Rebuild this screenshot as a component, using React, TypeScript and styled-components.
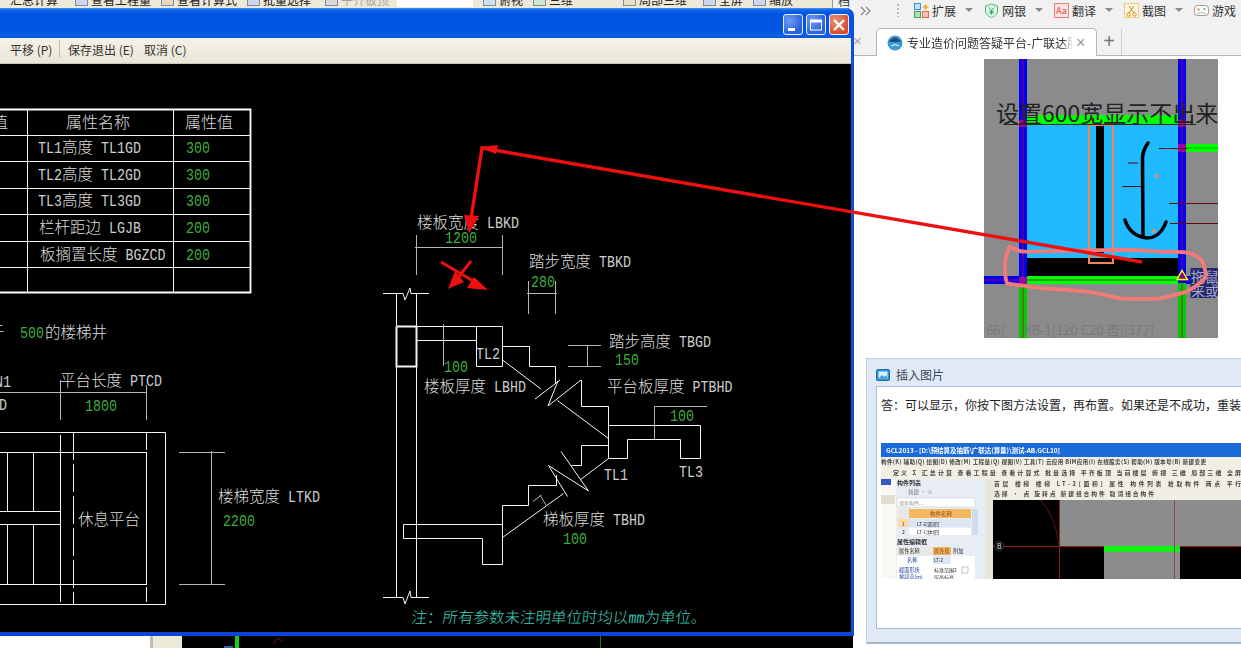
import React from "react";
import styled, { createGlobalStyle } from "styled-components";

const CJK = '"Noto Sans CJK SC", "Liberation Sans", sans-serif';

const Global = createGlobalStyle`
  html, body { margin: 0; padding: 0; width: 1241px; height: 648px; overflow: hidden; background: #fff; }
  #root { width: 1241px; height: 648px; }
`;

const Desktop = styled.div`
  position: relative;
  width: 1241px;
  height: 648px;
  overflow: hidden;
  display: grid;
  grid-template-columns: 853px 388px;
  font-family: ${CJK};
  font-size: 12px;
  color: #222;
`;

/* ---------- application behind the window ---------- */
const BackPane = styled.div`
  display: flex;
  flex-direction: column;
  justify-content: space-between;
  height: 648px;
`;
const BackTop = styled.div`
  height: 8px;
  display: flex;
  overflow: hidden;
`;
const AppStrip = styled.div`
  width: 833px;
  height: 8px;
  background: #ece9d8;
  overflow: hidden;
  border-right: 1px solid #9a9a9a;
  box-sizing: border-box;
`;
const AppStripRow = styled.div`
  display: flex;
  align-items: center;
  height: 18px;
  margin-top: -10px;
  padding-left: 10px;
`;
const AppStripItem = styled.span<{ $w: number; $muted?: boolean }>`
  display: flex;
  align-items: center;
  gap: 3px;
  width: ${(p) => p.$w}px;
  flex: none;
  white-space: nowrap;
  color: ${(p) => (p.$muted ? "#a8a8a8" : "#222")};
`;
const AppStripIcon = styled.i<{ $c: string }>`
  display: block;
  width: 13px;
  height: 14px;
  background: ${(p) => p.$c};
  border: 1px solid #7d8ba6;
  box-sizing: border-box;
`;
const AppStripField = styled.span`
  display: block;
  width: 76px;
  height: 16px;
  margin-right: 10px;
  background: #fff;
  flex: none;
`;
const BrowserCorner = styled.div`
  flex: 1;
  background: #f1f1f1;
  line-height: 12px;
  margin-top: -5px;
  padding-left: 5px;
  color: #333;
`;
const BackBottom = styled.div`
  height: 12px;
  display: flex;
  background: #000;
`;
const BackWhite = styled.div`
  width: 150px;
  background: #fff;
  border-right: 3px solid #bdbdb5;
  flex: none;
`;
const BackBeige = styled.div`
  width: 29px;
  background: #ece9d8;
  flex: none;
`;
const BackCanvas = styled.svg`
  flex: 1;
  height: 12px;
  display: block;
`;

/* ---------- browser ---------- */
const Browser = styled.div`
  display: flex;
  flex-direction: column;
  height: 648px;
  background: #fff;
  overflow: hidden;
`;
const BrowserBar = styled.div`
  height: 28px;
  flex: none;
  background: #f1f1f1;
  display: flex;
  align-items: flex-start;
  padding: 2px 0 0 7px;
  box-sizing: border-box;
  color: #333;
`;
const Chevrons = styled.svg`
  width: 12px;
  height: 12px;
  margin: 3px 25px 0 0;
  flex: none;
`;
const Grip = styled.i`
  width: 2px;
  height: 13px;
  margin: 2px 15px 0 0;
  flex: none;
  background: repeating-linear-gradient(#bdbdbd 0 2px, transparent 2px 4px);
`;
const BarItem = styled.div`
  display: flex;
  align-items: center;
  height: 16px;
  flex: none;
  width: 70px;
`;
const BarIcon = styled.svg`
  width: 15px;
  height: 15px;
  margin-right: 3px;
  flex: none;
`;
const BarCaret = styled.i`
  width: 0;
  height: 0;
  margin-left: 9px;
  border-left: 4px solid transparent;
  border-right: 4px solid transparent;
  border-top: 4px solid #8a8a8a;
`;
const TabBar = styled.div`
  height: 28px;
  flex: none;
  background: #f1f1f1;
  border-bottom: 1px solid #b7b7b7;
  box-sizing: border-box;
  display: flex;
  align-items: flex-end;
`;
const TabStub = styled.div`
  width: 23px;
  height: 27px;
  flex: none;
  color: #aaa;
  font-size: 15px;
  line-height: 25px;
  font-family: "Liberation Sans", sans-serif;
`;
const Tab = styled.div`
  width: 221px;
  height: 28px;
  flex: none;
  background: #fff;
  border: 1px solid #b7b7b7;
  border-bottom: none;
  border-radius: 5px 5px 0 0;
  box-sizing: border-box;
  display: flex;
  align-items: center;
  padding: 0 9px 0 10px;
  margin-bottom: -1px;
`;
const Favicon = styled.svg`
  width: 16px;
  height: 16px;
  flex: none;
`;
const TabTitle = styled.span`
  width: 166px;
  flex: none;
  margin-left: 4px;
  overflow: hidden;
  white-space: nowrap;
  color: #333;
  mask-image: linear-gradient(90deg, #000 94%, transparent);
`;
const TabClose = styled.span`
  color: #999;
  font-size: 16px;
  margin-left: 3px;
  font-family: "Liberation Sans", sans-serif;
`;
const TabPlus = styled.div`
  width: 25px;
  height: 27px;
  flex: none;
  text-align: center;
  color: #777;
  font-size: 20px;
  line-height: 26px;
  border-right: 1px solid #d0d0d0;
  box-sizing: border-box;
  font-family: "Liberation Sans", sans-serif;
`;
const Page = styled.div`
  flex: 1;
  display: flex;
  flex-direction: column;
  padding-top: 3px;
`;
const QuestionShot = styled.svg`
  display: block;
  width: 234px;
  height: 279px;
  margin-left: 131px;
  flex: none;
`;
const Dialog = styled.div`
  width: 400px;
  height: 286px;
  margin: 20px 0 0 13px;
  flex: none;
  background: #dfeaf6;
  border: 1px solid #bccde0;
  border-bottom: 2px solid #a9b8c8;
  box-sizing: border-box;
  padding: 0 0 13px 9px;
  display: flex;
  flex-direction: column;
`;
const DialogHead = styled.div`
  height: 27px;
  flex: none;
  display: flex;
  align-items: center;
  gap: 6px;
  padding-top: 4px;
  box-sizing: border-box;
  color: #3a4656;
`;
const DialogBody = styled.div`
  flex: 1;
  background: #fff;
  border: 1px solid #a9bfd4;
  padding: 9px 0 0 4px;
  color: #222;
`;
const AnswerLine = styled.div`
  height: 18px;
  line-height: 18px;
  white-space: nowrap;
`;
const AnswerShot = styled.svg`
  display: block;
  margin-top: 29px;
  width: 360px;
  height: 136px;
  filter: blur(0.45px);
`;

/* ---------- CAD window ---------- */
const CadWindow = styled.div`
  position: absolute;
  left: -3px;
  top: 8px;
  width: 857px;
  height: 628px;
  box-sizing: border-box;
  border-right: 3px solid #0b4fdc;
  border-left: 3px solid #0b4fdc;
  border-bottom: 4px solid #0c46d0;
  border-radius: 0 8px 0 0;
  background: #0b4fdc;
  display: flex;
  flex-direction: column;
  overflow: hidden;
`;
const TitleBar = styled.div`
  height: 30px;
  flex: none;
  background: linear-gradient(#4a96f2 0, #1166e6 2px, #0054e0 6px, #0056e2 22px, #0a62e6 28px, #0a4fd0 30px);
  display: flex;
  justify-content: flex-end;
  align-items: flex-start;
  gap: 3px;
  padding: 6px 2px 0 0;
  box-sizing: border-box;
`;
const WinButton = styled.div<{ $close?: boolean }>`
  width: 20px;
  height: 21px;
  box-sizing: border-box;
  border: 1px solid #e8eefc;
  border-radius: 3px;
  background: ${(p) =>
    p.$close
      ? "radial-gradient(circle at 30% 30%, #ee9074, #d8502c 70%)"
      : "radial-gradient(circle at 30% 30%, #6e9df0, #2c62dc 70%)"};
  display: flex;
  align-items: center;
  justify-content: center;
`;
const WinGlyph = styled.svg`
  width: 16px;
  height: 16px;
  display: block;
`;
const CadToolbar = styled.div`
  height: 26px;
  flex: none;
  display: flex;
  align-items: center;
  padding-left: 10px;
  padding-bottom: 3px;
  box-sizing: border-box;
  background: linear-gradient(#f4f2e8, #e9e6d6);
  border-bottom: 1px solid #c9c6b4;
  color: #333;
`;
const CadCommand = styled.span<{ $w: number }>`
  width: ${(p) => p.$w}px;
  flex: none;
  white-space: nowrap;
`;
const CadSep = styled.i`
  width: 1px;
  height: 18px;
  margin: 0 8px 0 0;
  background: #c4c1ae;
  flex: none;
`;
const CadCanvas = styled.svg`
  display: block;
  width: 851px;
  height: 568px;
  flex: none;
  background: #000;
`;
const CadCjk = styled.text<{ $tone: string }>`
  font-family: ${CJK};
  font-weight: 300;
  fill: ${(p) => p.$tone};
  fill-opacity: 0.92;
`;
const CadLatin = styled.text<{ $tone: string }>`
  font-family: "Liberation Mono", monospace;
  font-size: 16px;
  fill: ${(p) => p.$tone};
  fill-opacity: 0.85;
`;
const CadPath = styled.polyline<{ $tone: string; $w?: number; $dash?: string }>`
  fill: none;
  stroke: ${(p) => p.$tone};
  stroke-width: ${(p) => p.$w ?? 1};
  stroke-dasharray: ${(p) => p.$dash ?? "none"};
`;
const ArrowLayer = styled.svg`
  position: absolute;
  left: 0;
  top: 0;
  width: 1241px;
  height: 648px;
  pointer-events: none;
`;
const ShotText = styled.text<{ $c?: string; $s?: number; $w?: number }>`
  font-family: ${CJK};
  font-size: ${(p) => p.$s ?? 6}px;
  font-weight: ${(p) => p.$w ?? 400};
  fill: ${(p) => p.$c ?? "#333"};
`;

const WHITE = "#f4f4f4";
const GRAY = "#b4b4b4";
const GREEN = "#4ad04a";
const CYAN = "#48e4d4";

const CadLabel = ({
  x,
  y,
  text,
  tone = WHITE,
  cjk = 15.5,
}: {
  x: number;
  y: number;
  text: string;
  tone?: string;
  cjk?: number;
}) => {
  const runs = text.match(/[\u3000-\u9fff\uff00-\uffef]+| +|[^\u3000-\u9fff\uff00-\uffef ]+/g) ?? [];
  let cx = x;
  return (
    <g>
      {runs.map((r, i) => {
        const at = cx;
        if (/^ +$/.test(r)) {
          cx += 8 * r.length;
          return null;
        }
        if (/^[\u3000-\u9fff\uff00-\uffef]/.test(r)) {
          cx += cjk * r.length;
          return (
            <CadCjk key={i} x={at} y={y} fontSize={cjk} $tone={tone}>
              {r}
            </CadCjk>
          );
        }
        cx += 8 * r.length;
        return (
          <CadLatin key={i} transform={`translate(${at} ${y}) scale(0.8333 1)`} $tone={tone}>
            {r}
          </CadLatin>
        );
      })}
    </g>
  );
};

const tableFrame = "0,109.5 250.5,109.5 250.5,292.5 0,292.5";

const whitePaths = [
  // table
  "0,135.5 250,135.5",
  "0,161.5 250,161.5",
  "0,188.5 250,188.5",
  "0,214.5 250,214.5",
  "0,241.5 250,241.5",
  "0,267.5 250,267.5",
  "27.5,109 27.5,293",
  "173.5,109 173.5,293",
  // plan view
  "0,432.5 165.5,432.5 165.5,604.5 0,604.5",
  "0,452.5 147,452.5",
  "0,584.5 147,584.5",
  "60.5,435 60.5,602",
  "146.5,432 146.5,450",
  "146.5,452 146.5,584",
  "146.5,587 146.5,602",
  "7.5,452 7.5,511",
  "33.5,452 33.5,511",
  "7.5,524 7.5,584",
  "33.5,524 33.5,584",
  "0,511.5 60,511.5",
  "0,524.5 60,524.5",
  // wall + breaks
  "383,293.5 403,293.5 405,300 410,288 411,293.5 429,293.5",
  "383,597.5 403,597.5 405,604 410,591 411,597.5 429,597.5",
  "396.5,293 396.5,326",
  "416.5,293 416.5,326",
  "396.5,366 396.5,597",
  "416.5,366 416.5,597",
  // upper landing + flight
  "416,326.5 502.5,326.5 502.5,346.5 529.5,346.5 529.5,366.5 555.5,366.5 555.5,384",
  "416,340.5 476.5,340.5",
  "476.5,326.5 476.5,366.5 502.5,366.5 502.5,346.5",
  "502.5,360 541,389",
  "535,399 560,380",
  "548,406 558,381",
  "548,406 581,380",
  "557.5,400.5 608.5,438.5",
  "581.5,380 581.5,406.5 608.5,406.5 608.5,458.5",
  // middle landing
  "608.5,425.5 700.5,425.5 700.5,458.5 680.5,458.5 680.5,439.5 627.5,439.5 627.5,458.5 608.5,458.5",
  // lower flight
  "608.5,445.5 581.5,445.5 581.5,465.5 571.5,465.5",
  "561,451.5 588.5,491",
  "548.5,465.5 588.5,491",
  "548.5,465.5 567.5,496.5",
  "608.5,458.5 580,480",
  "563.5,493.5 502.5,537.5",
  "556.5,475 556.5,485.5 528.5,485.5 528.5,505.5 502.5,505.5 502.5,564.5 482.5,564.5 482.5,538.5 403.5,538.5 403.5,524.5 502.5,524.5",
];

const grayPaths = [
  "0,392.5 146,392.5",
  "60.5,380 60.5,420",
  "146.5,385 146.5,420",
  "179,452.5 225,452.5",
  "179,584.5 225,584.5",
  "211.5,451 211.5,585",
  "416.5,235 416.5,275",
  "502.5,235 502.5,275",
  "415,247.5 503,247.5",
  "528.5,281 528.5,314",
  "555.5,281 555.5,314",
  "527,293.5 557,293.5",
  "443.5,324 443.5,366",
  "568,345.5 601,345.5",
  "568,366.5 601,366.5",
  "587.5,345 587.5,367",
  "654.5,439 654.5,406.5 707,406.5",
  "533,501.5 541.5,495",
  "540,495 546.5,506",
];

const ShieldPath = "M7.5 1 L13.5 3 V8 C13.5 11 10.5 13.5 7.5 14.5 C4.5 13.5 1.5 11 1.5 8 V3 Z";

const BrowserIcon = ({ kind }: { kind: string }) => {
  if (kind === "ext")
    return (
      <BarIcon viewBox="0 0 15 15">
        <rect x="0.5" y="0.5" width="6" height="6" fill="#bfe0f8" stroke="#3d8fd6" />
        <path d="M11.5 0.5 L13 3 L15 4 L13 5 L11.5 7.5 L10 5 L8 4 L10 3 Z" fill="#f0b030" />
        <rect x="0.5" y="8.5" width="6" height="6" fill="#a8e6b8" stroke="#39a85a" />
        <rect x="8.5" y="8.5" width="6" height="6" fill="#f8c0b0" stroke="#e06a50" />
      </BarIcon>
    );
  if (kind === "bank")
    return (
      <BarIcon viewBox="0 0 15 15">
        <path d={ShieldPath} fill="#dff6e6" stroke="#45b878" />
        <path d="M5 4.5 L7.5 7.5 L10 4.5 M7.5 7.5 V11.5 M5.3 8.3 H9.7 M5.3 10 H9.7" fill="none" stroke="#2f9e64" />
      </BarIcon>
    );
  if (kind === "trans")
    return (
      <BarIcon viewBox="0 0 15 15">
        <rect x="0.5" y="0.5" width="14" height="14" fill="#fbe3e0" stroke="#e8837a" />
        <ShotText x="2" y="11" $s={9} $c="#cf4b40">
          Aa
        </ShotText>
      </BarIcon>
    );
  if (kind === "shot")
    return (
      <BarIcon viewBox="0 0 15 15">
        <rect x="0.5" y="0.5" width="14" height="14" fill="#fdf6dc" stroke="#e8b84a" strokeDasharray="2 1" />
        <path d="M5 3 L10 10 M10 3 L5 10" stroke="#b8862a" strokeWidth="1" />
        <circle cx="4.5" cy="11.5" r="1.7" fill="none" stroke="#d8901c" />
        <circle cx="10.5" cy="11.5" r="1.7" fill="none" stroke="#d8901c" />
      </BarIcon>
    );
  return (
    <BarIcon viewBox="0 0 15 15">
      <rect x="0.5" y="2.5" width="14" height="10" rx="3" fill="#fff" stroke="#9a9a9a" />
      <circle cx="4.5" cy="6.5" r="1.2" fill="#e0a040" />
      <circle cx="10.5" cy="6" r="1" fill="#60a050" />
      <path d="M3 11 Q7.5 8 12 11" fill="none" stroke="#b0b0b0" />
    </BarIcon>
  );
};

const barItems = [
  { kind: "ext", label: "扩展" },
  { kind: "bank", label: "网银" },
  { kind: "trans", label: "翻译" },
  { kind: "shot", label: "截图" },
  { kind: "game", label: "游戏" },
];

const stripItems = [
  { w: 56, t: "汇总计算" },
  { w: 9, t: "" },
  { w: 86, t: "查看工程量", c: "#cfd8ea" },
  { w: 86, t: "查看计算式", c: "#e8d8c0" },
  { w: 78, t: "批量选择", c: "#cfd8ea" },
  { w: 72, t: "平齐板顶", c: "#d8d8d8", muted: true },
];
const stripTail = [
  { w: 50, t: "俯视", c: "#cfe0ea" },
  { w: 90, t: "三维", c: "#cfe8d0" },
  { w: 80, t: "局部三维", c: "#e8e0c0" },
  { w: 50, t: "全屏", c: "#cfd8ea" },
  { w: 60, t: "缩放", c: "#cfd8ea" },
];

export default function App() {
  return (
    <Desktop>
      <Global />
      <BackPane>
        <BackTop>
          <AppStrip>
            <AppStripRow>
              {stripItems.map((s, i) => (
                <AppStripItem key={i} $w={s.w} $muted={s.muted}>
                  {s.c && <AppStripIcon $c={s.c} />}
                  {s.t}
                </AppStripItem>
              ))}
              <AppStripField />
              {stripTail.map((s, i) => (
                <AppStripItem key={i} $w={s.w}>
                  <AppStripIcon $c={s.c} />
                  {s.t}
                </AppStripItem>
              ))}
            </AppStripRow>
          </AppStrip>
          <BrowserCorner>档</BrowserCorner>
        </BackTop>
        <BackBottom>
          <BackWhite />
          <BackBeige />
          <BackCanvas viewBox="182 636 671 12">
            <rect x="235" y="636" width="4" height="12" fill="#12d012" />
            <rect x="224" y="646" width="9" height="2" fill="#3a5fb0" />
            <path d="M273 644 L278 638 L283 642" fill="none" stroke="#7a1818" />
            <path d="M600.5 636 V648" stroke="#1f7a1f" />
          </BackCanvas>
        </BackBottom>
      </BackPane>

      <Browser>
        <BrowserBar>
          <Chevrons viewBox="0 0 12 12">
            <path d="M1 2 L5 6 L1 10 M6 2 L10 6 L6 10" fill="none" stroke="#888" strokeWidth="1.2" />
          </Chevrons>
          <Grip />
          {barItems.map((b) => (
            <BarItem key={b.kind}>
              <BrowserIcon kind={b.kind} />
              {b.label}
              {b.kind !== "game" && <BarCaret />}
            </BarItem>
          ))}
        </BrowserBar>
        <TabBar>
          <TabStub>×</TabStub>
          <Tab>
            <Favicon viewBox="0 0 16 16">
              <circle cx="8" cy="8" r="7.5" fill="#3d9ad8" />
              <path d="M2 7 Q8 -2 14 7 Z" fill="#1f4f78" />
              <path d="M4 11 Q8 8 12 11" stroke="#fff" fill="none" />
            </Favicon>
            <TabTitle>专业造价问题答疑平台-广联达服</TabTitle>
            <TabClose>×</TabClose>
          </Tab>
          <TabPlus>+</TabPlus>
        </TabBar>
        <Page>
          <QuestionShot viewBox="984 59 234 279">
            <rect x="984" y="59" width="234" height="279" fill="#8b8b8b" />
            <rect x="1027" y="125" width="151" height="133" fill="#1fbaff" />
            <rect x="1027" y="258" width="151" height="19" fill="#000" />
            <rect x="1027" y="115" width="151" height="10" fill="#0f0" />
            <rect x="1019" y="59" width="8" height="224" fill="#0000f0" />
            <rect x="1178" y="59" width="8" height="224" fill="#0000f0" />
            <rect x="984" y="276" width="35" height="8" fill="#0000f0" />
            <rect x="1186" y="276" width="5" height="8" fill="#0000f0" />
            <rect x="1027" y="276" width="151" height="8" fill="#0f0" />
            <rect x="1019" y="283" width="8" height="55" fill="#0c0" />
            <rect x="1178" y="283" width="8" height="55" fill="#0c0" />
            <rect x="1186" y="144" width="32" height="8" fill="#0f0" />
            <path d="M1023 59 V283 M1182 59 V283 M984 280 H1190 M1023 283 V338 M1182 283 V338" stroke="#c00040" strokeWidth="1" fill="none" opacity="0.8" />
            <path d="M1186 148 H1218 M1027 280 H1178" stroke="#0a0" fill="none" />
            <rect x="1019" y="120" width="8" height="7" fill="#a000a0" />
            <rect x="1178" y="120" width="8" height="7" fill="#a000a0" />
            <rect x="1178" y="144" width="8" height="8" fill="#a000a0" />
            <rect x="1019" y="277" width="8" height="7" fill="#a000a0" />
            <rect x="1096" y="126" width="8" height="127" fill="#000" />
            <rect x="1089" y="125" width="24" height="138" fill="none" stroke="#f0845c" strokeWidth="2" />
            <path d="M1089 257 H1113" stroke="#f0845c" strokeWidth="1" />
            <path d="M1148 143 Q1143 150 1142.5 158 L1143 235" fill="none" stroke="#000" strokeWidth="3.5" strokeLinecap="round" />
            <path d="M1125 220 Q1130 236 1147 238 Q1160 238 1166 222" fill="none" stroke="#000" strokeWidth="3.5" strokeLinecap="round" />
            <path d="M1159 148.5 H1187 M1128 163 H1138 M1122.5 186.5 H1141 M1169 203.5 H1218 M1170 223.5 H1218" stroke="#5a0a14" fill="none" />
            <circle cx="1157" cy="176" r="2" fill="#d89070" />
            <circle cx="1154" cy="231" r="2" fill="#d89070" />
            <rect x="1190.5" y="268" width="28" height="30" fill="#27276e" />
            <ShotText x="1191" y="282" $s={14} $c="#a8a8c8">拖鼠</ShotText>
            <ShotText x="1191" y="296" $s={14} $c="#a8a8c8">来或</ShotText>
            <path d="M1177 279.5 L1182 270.5 L1187.5 279.5 Z" fill="#7a0a7a" stroke="#ff0" strokeWidth="1.4" />
            <path
              d="M1010 246.7 C1016 250 1020 252 1025 251.7 C1045 252 1080 250 1110 250 C1130 249 1150 251 1160 251.7 C1172 252 1184 251 1190 253.3 C1198 256 1203 260 1203.5 265 C1206 272 1206 274 1205 278 C1200 284 1193 288 1187 291.7 C1178 294 1170 297 1160 298.3 C1148 299 1132 299 1120 298.3 C1108 296 1098 293 1087 291.7 C1072 290 1056 289 1043 288.3 C1030 287 1018 285 1007 283.3 C1005 278 1005 272 1005 266.7 C1005 258 1007 252 1010 246.7 Z"
              fill="none"
              stroke="#f47a7a"
              strokeWidth="3.8"
            />
            <ShotText x="986" y="335" $s={13} $c="#7a7a7a">66]</ShotText>
            <ShotText x="1024" y="335" $s={13} $c="#7a7a7a">XB-1[120 C20 否][372]</ShotText>
            <path d="M1003 124.5 H1196" stroke="#2a2a2a" />
            <ShotText x="996" y="122" $s={23} $c="#222">设置600宽显示不出来</ShotText>
          </QuestionShot>
          <Dialog>
            <DialogHead>
              <svg width="14" height="12" viewBox="0 0 14 12">
                <rect x="0.5" y="0.5" width="13" height="11" rx="1" fill="#2f8fd0" stroke="#1f6fa8" />
                <rect x="2.5" y="2.5" width="9" height="7" fill="#d8f0fb" />
                <path d="M2.5 9.5 L6 6 L8 8 L10 6.5 L11.5 9.5 Z" fill="#3f9ad8" />
              </svg>
              插入图片
            </DialogHead>
            <DialogBody>
              <AnswerLine>答：可以显示，你按下图方法设置，再布置。如果还是不成功，重装软件试一下。</AnswerLine>
              <AnswerShot viewBox="881 442 360 136">
                <rect x="881" y="442" width="360" height="136" fill="#f1efe4" />
                <rect x="881" y="442" width="360" height="14" fill="#1a6ad8" />
                <ShotText x="886" y="452" $s={6.5} $w={700} $c="#fff" textLength={174}>
                  GCL2013 - [D:\预结算及抽筋\广联达(算量)\测试-AB.GCL10]
                </ShotText>
                <ShotText x="881" y="463" $s={5.6} $w={700} $c="#444" textLength={325}>
                  构件(K) 辅助(Q) 绘图(D) 修改(M) 工程量(Q) 视图(V) 工具(T) 云应用 BIM应用(I) 在线服务(S) 帮助(H) 版本号(B) 新建变更
                </ShotText>
                <ShotText x="893" y="474" $s={6} $w={700} $c="#444" textLength={348}>
                  定义 Σ 汇总计算 查看工程量 查看计算式 批量选择 平齐板顶 当前楼层 俯视 三维 局部三维 全屏
                </ShotText>
                <rect x="881" y="478" width="15" height="100" fill="#f8f8f4" />
                <rect x="881" y="478" width="10" height="6" fill="#3458c8" />
                <rect x="881" y="494" width="14" height="9" fill="#e0ded0" />
                <rect x="897" y="478" width="88" height="100" fill="#e8edf5" />
                <ShotText x="897" y="484" $s={6} $w={700}>构件列表</ShotText>
                <ShotText x="908" y="493" $s={5.6} $c="#777">新建 · ×</ShotText>
                <rect x="897" y="497" width="78" height="9" fill="#fff" stroke="#bcc" strokeWidth="0.5" />
                <ShotText x="899" y="504" $s={5} $c="#999">搜索构件...</ShotText>
                <rect x="898" y="508" width="11" height="10" fill="#e8e8e8" />
                <rect x="909" y="508" width="62" height="9" fill="#f4b860" />
                <ShotText x="930" y="515" $s={5.5} $c="#8a4a10">构件名称</ShotText>
                <rect x="898" y="518" width="11" height="8" fill="#fbdca8" />
                <rect x="909" y="518" width="62" height="8" fill="#dce6f4" />
                <ShotText x="902" y="525" $s={5}>1</ShotText>
                <ShotText x="917" y="525" $s={5}>LT-2[面积]</ShotText>
                <rect x="909" y="527" width="62" height="7" fill="#fff" />
                <ShotText x="902" y="533" $s={5}>2</ShotText>
                <ShotText x="917" y="533" $s={5}>LT-1[体积]</ShotText>
                <rect x="972" y="508" width="6" height="26" fill="#cfdcec" />
                <ShotText x="897" y="543" $s={6} $w={700}>属性编辑框</ShotText>
                <rect x="897" y="546" width="36" height="8" fill="#e8e8e8" />
                <rect x="933" y="546" width="18" height="8" fill="#f4b860" />
                <ShotText x="899" y="552" $s={5.2}>属性名称</ShotText>
                <ShotText x="934" y="552" $s={5.2} $c="#8a4a10">属性值</ShotText>
                <ShotText x="953" y="552" $s={5.2}>附加</ShotText>
                <rect x="897" y="555" width="78" height="23" fill="#fff" />
                <rect x="933" y="555" width="18" height="8" fill="#dce6f4" />
                <ShotText x="907" y="561" $s={5.2} $c="#2040a0">名称</ShotText>
                <ShotText x="934" y="561" $s={5}>LT-2</ShotText>
                <ShotText x="899" y="571" $s={5.2} $c="#2040a0">截面形状</ShotText>
                <ShotText x="934" y="571" $s={5}>标准范围2</ShotText>
                <rect x="962" y="566" width="6" height="6" fill="#fff" stroke="#889" strokeWidth="0.5" />
                <ShotText x="899" y="578" $s={5.2} $c="#2040a0">梯段高(m)</ShotText>
                <ShotText x="934" y="578" $s={5}>层高标高</ShotText>
                <rect x="985" y="478" width="8" height="100" fill="#e6e6de" />
                <ShotText x="994" y="485" $s={5.8} $w={700} $c="#444" textLength={247}>
                  首层 楼梯 楼梯 LT-2[面积] 属性 构件列表 拾取构件 两点 平行
                </ShotText>
                <ShotText x="994" y="495" $s={5.8} $w={700} $c="#444" textLength={160}>
                  选择 · 点 旋转点 新建组合构件 取消组合构件
                </ShotText>
                <rect x="993" y="499" width="248" height="79" fill="#000" />
                <rect x="1060" y="499" width="181" height="46" fill="#8c8c8c" />
                <rect x="1104" y="545" width="76" height="33" fill="#8c8c8c" />
                <rect x="1104" y="545" width="76" height="6" fill="#12f012" />
                <path d="M993 545.5 H1104 M1180 545.5 H1241 M1059.5 499 V578" stroke="#8a2020" />
                <path d="M1174.5 499 V578" stroke="#904848" />
                <path d="M1040 499 Q1056 515 1059 545" stroke="#5a1818" fill="none" />
                <circle cx="999" cy="545" r="5" fill="#111" stroke="#555" strokeWidth="0.5" />
                <ShotText x="997" y="548" $s={7} $c="#ddd">B</ShotText>
              </AnswerShot>
            </DialogBody>
          </Dialog>
        </Page>
      </Browser>

      <CadWindow>
        <TitleBar>
          <WinButton>
            <WinGlyph viewBox="0 0 16 16">
              <rect x="3" y="11" width="7" height="3" fill="#fff" />
            </WinGlyph>
          </WinButton>
          <WinButton>
            <WinGlyph viewBox="0 0 16 16">
              <rect x="2.5" y="3" width="11" height="10" fill="none" stroke="#fff" />
              <rect x="2.5" y="3" width="11" height="2.5" fill="#fff" />
            </WinGlyph>
          </WinButton>
          <WinButton $close>
            <WinGlyph viewBox="0 0 16 16">
              <path d="M3 3 L13 13 M13 3 L3 13" stroke="#fff" strokeWidth="2.4" />
            </WinGlyph>
          </WinButton>
        </TitleBar>
        <CadToolbar>
          <CadCommand $w={49}>平移 (P)</CadCommand>
          <CadSep />
          <CadCommand $w={76}>保存退出 (E)</CadCommand>
          <CadCommand $w={44}>取消 (C)</CadCommand>
        </CadToolbar>
        <CadCanvas viewBox="0 64 851 568">
          <CadPath points={tableFrame} $tone="#ffffff" $w={1.8} />
          {whitePaths.map((d, i) => (
            <CadPath key={i} points={d} $tone={WHITE} />
          ))}
          {grayPaths.map((d, i) => (
            <CadPath key={i} points={d} $tone={GRAY} />
          ))}
          <CadPath points="396.5,326.5 416.5,326.5 416.5,366.5 396.5,366.5 396.5,326.5" $tone={WHITE} $w={2} />
          <CadPath points="73.5,432 73.5,605" $tone={WHITE} $dash="28 4" />

          <CadLabel x={-8} y={128} text="值" cjk={16} />
          <CadLabel x={66} y={128} text="属性名称" cjk={16} />
          <CadLabel x={185} y={128} text="属性值" cjk={16} />
          <CadLabel x={38} y={153} text="TL1高度 TL1GD" />
          <CadLabel x={38} y={180} text="TL2高度 TL2GD" />
          <CadLabel x={38} y={206} text="TL3高度 TL3GD" />
          <CadLabel x={39} y={233} text="栏杆距边 LGJB" />
          <CadLabel x={40} y={260} text="板搁置长度 BGZCD" />
          <CadLabel x={186} y={153} text="300" tone={GREEN} />
          <CadLabel x={186} y={180} text="300" tone={GREEN} />
          <CadLabel x={186} y={206} text="300" tone={GREEN} />
          <CadLabel x={186} y={233} text="200" tone={GREEN} />
          <CadLabel x={186} y={260} text="200" tone={GREEN} />

          <CadLabel x={-11} y={338} text="于" />
          <CadLabel x={20} y={338} text="500" tone={GREEN} />
          <CadLabel x={45} y={338} text="的楼梯井" />
          <CadLabel x={-5} y={387} text="N1" />
          <CadLabel x={-1} y={410} text="D" />
          <CadLabel x={60} y={386} text="平台长度 PTCD" />
          <CadLabel x={85} y={411} text="1800" tone={GREEN} />
          <CadLabel x={78} y={525} text="休息平台" />
          <CadLabel x={218} y={502} text="楼梯宽度 LTKD" />
          <CadLabel x={223} y={526} text="2200" tone={GREEN} />

          <CadLabel x={417} y={228} text="楼板宽度 LBKD" />
          <CadLabel x={445} y={243} text="1200" tone={GREEN} />
          <CadLabel x={529} y={267} text="踏步宽度 TBKD" />
          <CadLabel x={531} y={287} text="280" tone={GREEN} />
          <CadLabel x={609} y={347} text="踏步高度 TBGD" />
          <CadLabel x={615} y={365} text="150" tone={GREEN} />
          <CadLabel x={476} y={359} text="TL2" />
          <CadLabel x={444} y={372} text="100" tone={GREEN} />
          <CadLabel x={424} y={392} text="楼板厚度 LBHD" />
          <CadLabel x={607} y={392} text="平台板厚度 PTBHD" />
          <CadLabel x={670} y={421} text="100" tone={GREEN} />
          <CadLabel x={604} y={480} text="TL1" />
          <CadLabel x={679} y={477} text="TL3" />
          <CadLabel x={543} y={525} text="梯板厚度 TBHD" />
          <CadLabel x={563} y={544} text="100" tone={GREEN} />
          <g transform="translate(411 623) skewX(-6)">
            <CadLabel x={0} y={0} text="注：所有参数未注明单位时均以mm为单位。" tone={CYAN} />
          </g>
        </CadCanvas>
      </CadWindow>

      <ArrowLayer viewBox="0 0 1241 648">
        <CadPath points="1142,262 482,148 470,225" $tone="#ee1010" $w={3.4} />
        <polygon points="479,147 498,145 496,154" fill="#ee1010" />
        <polygon points="469,233 464,215 479,216" fill="#ee1010" />
        <CadPath points="441,262 480,285" $tone="#ee1010" $w={3} />
        <CadPath points="471,261 453,284" $tone="#ee1010" $w={3} />
        <polygon points="488,290 467,288 474,277" fill="#ee1010" />
        <polygon points="448,289 455,271 464,282" fill="#ee1010" />
      </ArrowLayer>
    </Desktop>
  );
}
